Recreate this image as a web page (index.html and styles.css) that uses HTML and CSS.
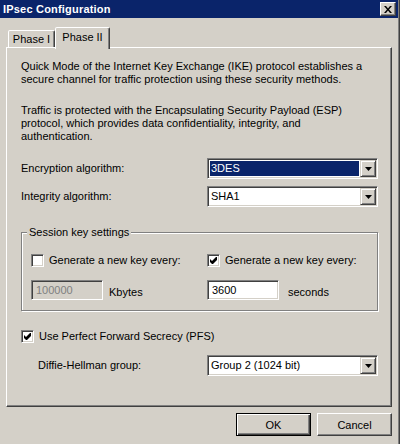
FILE: index.html
```html
<!DOCTYPE html>
<html lang="en">
<head>
    <meta charset="UTF-8">
    <title>IPsec Configuration</title>
    <link rel="stylesheet" href="styles.css">
</head>
<body>

<div class="window">
  <div class="frame">
    <div class="titlebar">
        <span class="title">IPsec Configuration</span>
        <div class="close-btn">
            <svg width="8" height="7" viewBox="0 0 8 7"><path d="M0 0h2l2 2.4 2-2.4h2l-3 3.5 3 3.5h-2l-2-2.4-2 2.4h-2l3-3.5z" fill="#000"/></svg>
        </div>
    </div>

    <div class="dialog">
        <div class="tabs">
            <div class="tab">Phase I</div>
            <div class="tab tab-active">Phase II</div>
        </div>

        <div class="panel">
            <p>Quick Mode of the Internet Key Exchange (IKE) protocol establishes a<br>secure channel for traffic protection using these security methods.</p>
            <p class="para-last">Traffic is protected with the Encapsulating Security Payload (ESP)<br>protocol, which provides data confidentiality, integrity, and<br>authentication.</p>

            <div class="field-row">
                <label>Encryption algorithm:</label>
                <div class="combo">
                    <span class="combo-text combo-selected">3DES</span>
                    <span class="combo-btn"><svg width="7" height="4" viewBox="0 0 7 4"><path d="M0 0h7l-3.5 4z" fill="#000"/></svg></span>
                </div>
            </div>
            <div class="field-row field-row-last">
                <label>Integrity algorithm:</label>
                <div class="combo">
                    <span class="combo-text">SHA1</span>
                    <span class="combo-btn"><svg width="7" height="4" viewBox="0 0 7 4"><path d="M0 0h7l-3.5 4z" fill="#000"/></svg></span>
                </div>
            </div>

            <fieldset class="group">
                <legend>Session key settings</legend>
                <div class="group-grid">
                    <div class="check">
                        <span class="checkbox"></span>
                        <span>Generate a new key every:</span>
                    </div>
                    <div class="check">
                        <span class="checkbox"><svg width="7" height="7" viewBox="0 0 7 7"><path d="M0 2L2 4L6 0H7V3L3 7H2L0 5z" fill="#000"/></svg></span>
                        <span>Generate a new key every:</span>
                    </div>
                    <div class="amount">
                        <input type="text" class="textbox" value="100000" disabled>
                        <span class="unit">Kbytes</span>
                    </div>
                    <div class="amount">
                        <input type="text" class="textbox" value="3600">
                        <span class="unit unit-wide">seconds</span>
                    </div>
                </div>
            </fieldset>

            <div class="check check-pfs">
                <span class="checkbox"><svg width="7" height="7" viewBox="0 0 7 7"><path d="M0 2L2 4L6 0H7V3L3 7H2L0 5z" fill="#000"/></svg></span>
                <span>Use Perfect Forward Secrecy (PFS)</span>
            </div>

            <div class="field-row">
                <label class="indent">Diffie-Hellman group:</label>
                <div class="combo">
                    <span class="combo-text">Group 2 (1024 bit)</span>
                    <span class="combo-btn"><svg width="7" height="4" viewBox="0 0 7 4"><path d="M0 0h7l-3.5 4z" fill="#000"/></svg></span>
                </div>
            </div>
        </div>

        <div class="buttons">
            <button class="btn btn-default">OK</button>
            <button class="btn">Cancel</button>
        </div>
    </div>
  </div>
</div>

</body>
</html>
```

FILE: styles.css
```css
body {
    margin: 0;
    padding: 0;
    background-color: #D4D0C8;
    font-family: "Liberation Sans", Arial, sans-serif;
    font-size: 11px;
    color: #000;
}

.window {
    width: 400px;
    height: 444px;
    box-sizing: border-box;
    border-right: 1px solid #404040;
    display: flex;
}
.frame {
    flex: 1;
    display: flex;
    flex-direction: column;
    border-right: 1px solid #808080;
}

/* title bar */
.titlebar {
    height: 18px;
    background-color: #0A246A;
    color: #fff;
    font-weight: bold;
    display: flex;
    align-items: center;
    justify-content: space-between;
    padding: 0 2px 0 3px;
}
.title {
    letter-spacing: 0.2px;
}
.close-btn {
    width: 16px;
    height: 14px;
    box-sizing: border-box;
    background-color: #D4D0C8;
    border: 1px solid;
    border-color: #fff #404040 #404040 #fff;
    box-shadow: inset -1px -1px #808080;
    display: flex;
    align-items: center;
    justify-content: center;
    padding-right: 1px;
}

.dialog {
    flex: 1;
    display: flex;
    flex-direction: column;
    padding: 9px 6px 8px 6px;
}

/* tabs */
.tabs {
    display: flex;
    align-items: flex-end;
    height: 20px;
    padding-left: 2px;
    position: relative;
    z-index: 1;
}
.tab {
    width: 47px;
    height: 17px;
    box-sizing: border-box;
    border: 1px solid;
    border-bottom: none;
    border-color: #fff #404040 transparent #fff;
    border-radius: 2px 2px 0 0;
    box-shadow: inset -1px 0 #808080;
    background-color: #D4D0C8;
    text-align: center;
    line-height: 13px;
    padding-top: 2px;
}
.tab-active {
    width: 55px;
    height: 22px;
    margin-bottom: -2px;
    padding-top: 3px;
}

/* panel */
.panel {
    flex: 1;
    border: 1px solid;
    border-color: #fff #404040 #404040 #fff;
    box-shadow: inset -1px -1px #808080;
    padding: 12px 13px 0 14px;
}
.panel p {
    margin: 0 0 18px;
    line-height: 13px;
    white-space: nowrap;
}
.panel .para-last {
    margin-bottom: 15px;
}

.field-row {
    display: grid;
    grid-template-columns: 186px 171px;
    align-items: center;
    margin-bottom: 7px;
    line-height: 13px;
}
.field-row-last {
    margin-bottom: 19px;
}
.indent {
    padding-left: 17px;
}

.combo {
    height: 21px;
    box-sizing: border-box;
    border: 1px solid;
    border-color: #808080 #fff #fff #808080;
    box-shadow: inset 1px 1px #404040, inset -1px -1px #D4D0C8;
    background-color: #fff;
    padding: 1px;
    display: flex;
}
.combo-text {
    flex: 1;
    margin: 1px;
    padding-left: 1px;
    line-height: 15px;
}
.combo-selected {
    background-color: #0A246A;
    color: #fff;
}
.combo-btn {
    width: 16px;
    height: 17px;
    box-sizing: border-box;
    border: 1px solid;
    border-color: #D4D0C8 #404040 #404040 #D4D0C8;
    box-shadow: inset 1px 1px #fff, inset -1px -1px #808080;
    background-color: #D4D0C8;
    display: flex;
    align-items: center;
    justify-content: center;
}

/* group box */
.group {
    margin: 0 0 19px;
    padding: 15px 0 10px 9px;
    border: 1px solid #808080;
    box-shadow: inset 1px 1px #fff, 1px 1px #fff;
}
.group legend {
    padding: 0 2px;
    margin-left: -4px;
    line-height: 13px;
    background-color: #D4D0C8;
}
.group-grid {
    display: grid;
    grid-template-columns: 176px 1fr;
    row-gap: 13px;
}

.check {
    display: flex;
    align-items: center;
    height: 13px;
    line-height: 13px;
}
.check-pfs {
    margin-bottom: 12px;
}
.checkbox {
    width: 13px;
    height: 13px;
    box-sizing: border-box;
    border: 1px solid;
    border-color: #808080 #fff #fff #808080;
    box-shadow: inset 1px 1px #404040, inset -1px -1px #D4D0C8;
    background-color: #fff;
    display: flex;
    align-items: center;
    justify-content: center;
    margin-right: 5px;
    flex-shrink: 0;
}

.amount {
    display: flex;
    align-items: flex-end;
    line-height: 13px;
}
.textbox {
    width: 72px;
    height: 20px;
    box-sizing: border-box;
    margin: 0;
    border: 1px solid;
    border-color: #808080 #fff #fff #808080;
    box-shadow: inset 1px 1px #404040, inset -1px -1px #D4D0C8;
    background-color: #fff;
    padding: 0 4px;
    font-family: inherit;
    font-size: 11px;
    color: #000;
    outline: none;
}
.textbox:disabled {
    background-color: #D4D0C8;
    color: #808080;
}
.unit {
    margin: 0 0 1px 6px;
}
.unit-wide {
    margin-left: 9px;
}

/* bottom buttons */
.buttons {
    display: flex;
    justify-content: flex-end;
    gap: 6px;
    margin-top: 6px;
}
.btn {
    width: 75px;
    height: 23px;
    box-sizing: border-box;
    background-color: #D4D0C8;
    border: 1px solid;
    border-color: #fff #404040 #404040 #fff;
    box-shadow: inset -1px -1px #808080;
    font-family: inherit;
    font-size: 11px;
    color: #000;
    padding: 0;
}
.btn-default {
    border-color: #000;
    box-shadow: inset 1px 1px #fff, inset -1px -1px #404040, inset -2px -2px #808080;
}
```
